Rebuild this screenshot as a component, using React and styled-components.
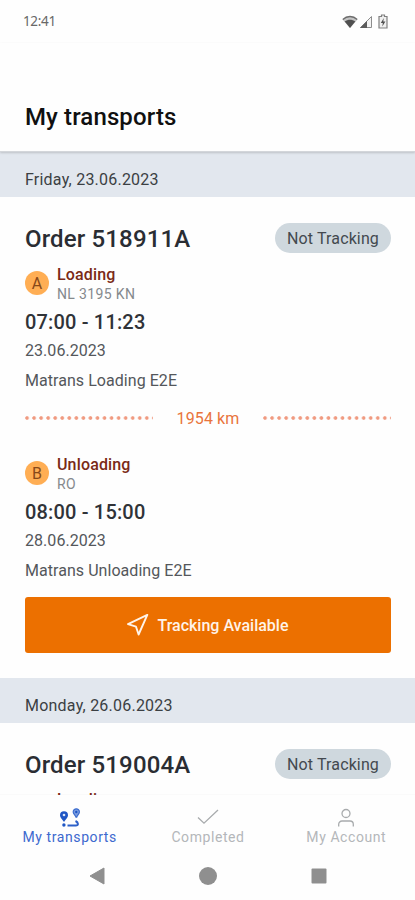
import React from "react";
import styled, { createGlobalStyle } from "styled-components";

const GlobalStyle = createGlobalStyle`
  * {
    box-sizing: border-box;
  }
  body {
    margin: 0;
    background: #fefefe;
    font-family: Roboto, "Liberation Sans", sans-serif;
  }
`;

const Screen = styled.div`
  display: flex;
  flex-direction: column;
  width: 415px;
  height: 900px;
  overflow: hidden;
  background: #fefefe;
`;

const StatusBar = styled.div`
  display: flex;
  flex: none;
  justify-content: space-between;
  align-items: center;
  height: 43px;
  padding: 0 27px 0 23px;
`;

const Clock = styled.span`
  margin-top: -1px;
  font-family: "Noto Sans", sans-serif;
  font-size: 13.5px;
  letter-spacing: -0.35px;
  color: #686868;
`;

const StatusIcons = styled.div`
  display: flex;
  align-items: center;
  gap: 1px;

  svg:last-child {
    margin-left: 4px;
  }
`;

const Header = styled.header`
  position: relative;
  flex: none;
  height: 109px;
  padding: 58px 25px 0;
  border-bottom: 1px solid #d3d6da;
  box-shadow: 0 1px 2px rgba(0, 0, 0, 0.16);
`;

const PageTitle = styled.h1`
  margin: 0;
  font-size: 24px;
  line-height: 32px;
  font-weight: 500;
  letter-spacing: 0.12px;
  color: #101010;
`;

const List = styled.main`
  flex: 1;
  min-height: 0;
  overflow: hidden;
`;

const DayBar = styled.div`
  height: 45px;
  padding: 14px 25px 0;
  font-size: 16px;
  line-height: 28px;
  letter-spacing: 0.22px;
  color: #3b3f43;
  background: #e2e7ee;
`;

const Card = styled.section`
  padding: 26px 24px 24.5px 25px;
`;

const OrderRow = styled.div`
  display: flex;
  justify-content: space-between;
  align-items: center;
  height: 30px;
  margin-bottom: 12px;
`;

const OrderTitle = styled.h2`
  margin: 2px 0 0;
  font-size: 24px;
  font-weight: 500;
  letter-spacing: 0.15px;
  color: #2a2d33;
`;

const Pill = styled.span`
  width: 116px;
  height: 30px;
  border-radius: 15px;
  font-size: 16px;
  line-height: 32px;
  text-align: center;
  letter-spacing: 0.13px;
  color: #43494f;
  background: #cfd8de;
`;

const StopHead = styled.div`
  display: flex;
  align-items: center;
  gap: 8px;
  height: 39px;
`;

const Marker = styled.span`
  width: 24px;
  height: 24px;
  margin-top: -3px;
  border-radius: 50%;
  font-size: 16px;
  line-height: 26px;
  text-align: center;
  color: #87491a;
  background: #ffae54;
`;

const StopKind = styled.div`
  font-size: 16px;
  line-height: 20px;
  font-weight: 500;
  letter-spacing: 0.15px;
  color: #7a2a16;
`;

const StopPlace = styled.div`
  font-size: 14px;
  line-height: 19px;
  letter-spacing: 0.35px;
  color: #85898d;
`;

const StopTime = styled.div`
  margin-top: 3.5px;
  font-size: 20px;
  line-height: 28px;
  font-weight: 500;
  letter-spacing: 0.17px;
  color: #303338;
`;

const StopText = styled.div`
  font-size: 16px;
  line-height: 30px;
  letter-spacing: 0.05px;
  color: #54575b;
`;

const Distance = styled.div`
  display: flex;
  justify-content: space-between;
  align-items: center;
  height: 48px;
  margin: -1.5px 0 13px;
  font-size: 16px;
  letter-spacing: 0.1px;
  color: #e9743c;
`;

const Dots = styled.span`
  width: 128px;
  height: 4px;
  margin-bottom: 1px;
  background: radial-gradient(circle at 2px 2px, #f09a80 1.4px, transparent 2.2px) 0 0 / 7.05px 4px repeat-x;
`;

const TrackButton = styled.button`
  display: flex;
  justify-content: center;
  align-items: center;
  gap: 8px;
  width: 100%;
  height: 56.5px;
  margin-top: 11px;
  padding: 1px 0 0;
  border: 0;
  border-radius: 3px;
  font-family: inherit;
  font-size: 16px;
  font-weight: 500;
  color: #fff3e8;
  background: #ec7000;
`;

const TabBar = styled.nav`
  display: grid;
  flex: none;
  grid-template-columns: repeat(3, 1fr);
  grid-template-rows: 57px 48px;
  height: 105px;
  box-shadow: 0 -1px 0 rgba(0, 0, 0, 0.015);
`;

const Tab = styled.div`
  display: flex;
  flex-direction: column;
  align-items: center;
  padding: 13px 0 0 1px;
  font-size: 14px;
  line-height: 18px;
  letter-spacing: 0.58px;
  color: ${({ $active }) => ($active ? "#3d69cf" : "#b4b7ba")};

  svg {
    display: block;
  }
`;

const SystemBar = styled.div`
  display: flex;
  grid-column: 1 / -1;
  justify-content: center;
  gap: 91px;
  padding: 14px 0 0 1px;
`;

const WifiIcon = () => (
  <svg width="16" height="14" viewBox="0 0 16 14">
    <path d="M.5 4.4C4.8.3 11.2.3 15.5 4.4L8 13z" fill="#c4c4c4" />
    <path d="M.8 4.4C5 .5 11 .5 15.2 4.4" fill="none" stroke="#6d6d6d" strokeWidth="1.3" />
    <path d="M2.7 6.5c3.2-2.2 7.4-2.2 10.600 0L8 13z" fill="#505050" />
  </svg>
);

const SignalIcon = () => (
  <svg width="14" height="14" viewBox="0 0 14 14">
    <path d="M1.5 12.5L12.5 1.5v11z" fill="#f4f4f4" stroke="#8d8d8d" />
    <path d="M1 13L8 6v7z" fill="#5c5c5c" />
  </svg>
);

const BatteryIcon = () => (
  <svg width="10" height="15" viewBox="0 0 10 15">
    <path d="M3.5 1h3v1.5H9V14H1V2.5h2.5z" fill="#f0f0f0" stroke="#808080" strokeWidth="1.2" />
    <path d="M5.8 4L2.8 9h2l-.5 3.5 3.1-5H5.3z" fill="#505050" />
  </svg>
);

const SendIcon = () => (
  <svg width="22" height="22" viewBox="0 0 22 22" fill="none" stroke="#fff3e8" strokeWidth="1.9" strokeLinejoin="round">
    <path d="M20.3 .9L1 10.1l8 2.6 2.6 7.8z" />
  </svg>
);

const RouteIcon = () => (
  <svg width="22" height="20" viewBox="0 0 22 20" fill="#1f56c4">
    <path d="M5 3.2a4 4 0 0 0-4 4c0 2.7 3 4.4 3.4 6.3h1.2C6 11.6 9 9.9 9 7.2a4 4 0 0 0-4-4z" />
    <circle cx="5" cy="7" r="1.3" fill="#dbe5f8" />
    <path d="M17.3.8a3.1 3.1 0 0 0-3.1 3.1c0 2.2 2.5 3.3 2.8 5.3h.7c.3-2 2.7-3.1 2.7-5.3A3.1 3.1 0 0 0 17.300.8z" fill="#7b9de0" stroke="#3d6dce" strokeWidth="1.2" />
    <circle cx="17.3" cy="4" r="1.2" />
    <circle cx="4.9" cy="17" r="1.7" />
    <path d="M8.5 17.5h8.300c3 0 2.700-3-.3-4.500" fill="none" stroke="#2d60c8" strokeWidth="2" />
  </svg>
);

const CheckIcon = () => (
  <svg width="22" height="20" viewBox="0 0 22 20" fill="none" stroke="#a8abad" strokeWidth="1.3">
    <path d="M1 9.5l6 5.7L21 2" />
  </svg>
);

const UserIcon = () => (
  <svg width="18" height="20" viewBox="0 0 18 20" fill="none" stroke="#a8abad" strokeWidth="1.3">
    <circle cx="9" cy="5.5" r="4" />
    <path d="M1.7 18.5v-2.2A3.3 3.3 0 0 1 5 13h8a3.3 3.3 0 0 1 3.3 3.3v2.2" />
  </svg>
);

const Stop = ({ letter, kind, place, time, date, name }) => (
  <div>
    <StopHead>
      <Marker>{letter}</Marker>
      <div>
        <StopKind>{kind}</StopKind>
        <StopPlace>{place}</StopPlace>
      </div>
    </StopHead>
    <StopTime>{time}</StopTime>
    <StopText>{date}</StopText>
    <StopText>{name}</StopText>
  </div>
);

// only the top of this line shows above the tab bar
const NextStopPeek = styled(StopKind)`
  margin-top: -1px;
  padding-left: 32px;
`;

export default () => {
  return (
    <>
      <GlobalStyle />
      <Screen>
        <StatusBar>
          <Clock>12:41</Clock>
          <StatusIcons>
            <WifiIcon />
            <SignalIcon />
            <BatteryIcon />
          </StatusIcons>
        </StatusBar>
        <Header>
          <PageTitle>My transports</PageTitle>
        </Header>
        <List>
          <DayBar>Friday, 23.06.2023</DayBar>
          <Card>
            <OrderRow>
              <OrderTitle>Order 518911A</OrderTitle>
              <Pill>Not Tracking</Pill>
            </OrderRow>
            <Stop
              letter="A"
              kind="Loading"
              place="NL 3195 KN"
              time="07:00 - 11:23"
              date="23.06.2023"
              name="Matrans Loading E2E"
            />
            <Distance>
              <Dots />
              1954 km
              <Dots />
            </Distance>
            <Stop
              letter="B"
              kind="Unloading"
              place="RO"
              time="08:00 - 15:00"
              date="28.06.2023"
              name="Matrans Unloading E2E"
            />
            <TrackButton>
              <SendIcon />
              Tracking Available
            </TrackButton>
          </Card>
          <DayBar>Monday, 26.06.2023</DayBar>
          <Card>
            <OrderRow>
              <OrderTitle>Order 519004A</OrderTitle>
              <Pill>Not Tracking</Pill>
            </OrderRow>
            <NextStopPeek>Loading</NextStopPeek>
          </Card>
        </List>
        <TabBar>
          <Tab $active>
            <RouteIcon />
            My transports
          </Tab>
          <Tab>
            <CheckIcon />
            Completed
          </Tab>
          <Tab>
            <UserIcon />
            My Account
          </Tab>
          <SystemBar>
            <svg width="20" height="20" viewBox="0 0 20 20">
              <path d="M3 10L17 2v16z" fill="#8f8f8f" stroke="#8f8f8f" strokeLinejoin="round" />
            </svg>
            <svg width="20" height="20" viewBox="0 0 20 20">
              <circle cx="10" cy="10" r="9" fill="#8f8f8f" />
            </svg>
            <svg width="20" height="20" viewBox="0 0 20 20">
              <rect x="2.5" y="2.5" width="15" height="15" rx="1" fill="#8f8f8f" />
            </svg>
          </SystemBar>
        </TabBar>
      </Screen>
    </>
  );
};
